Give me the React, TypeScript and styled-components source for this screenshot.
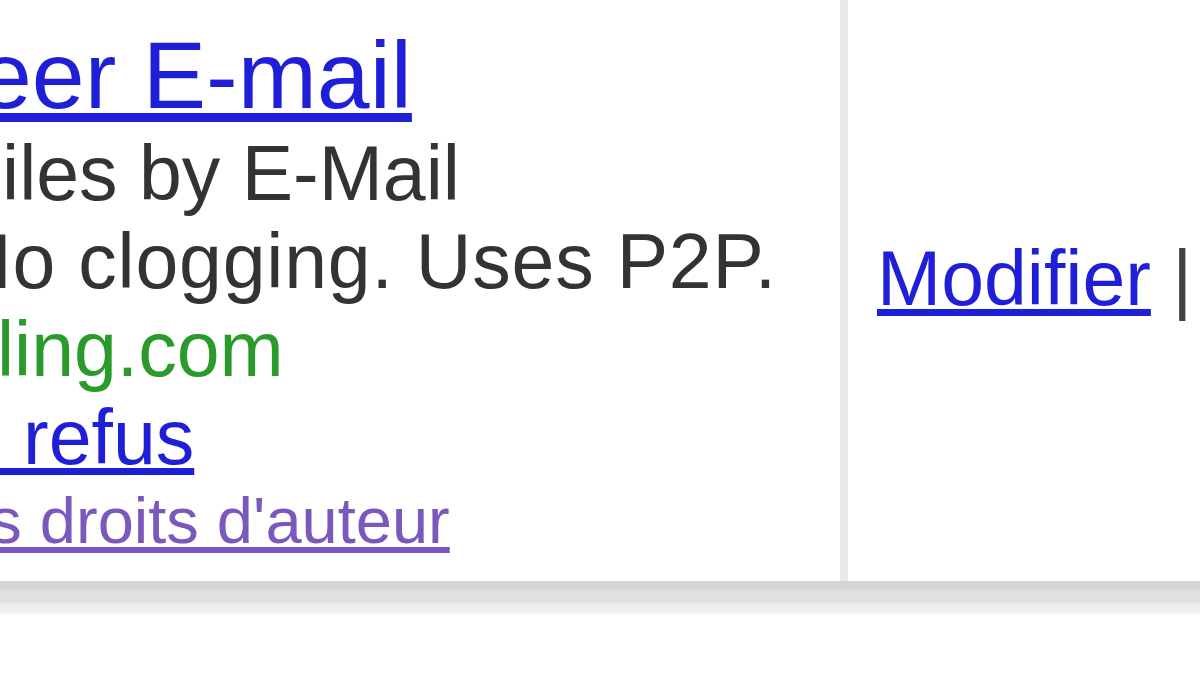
import React from "react";
import styled, { createGlobalStyle } from "styled-components";

const Global = createGlobalStyle`
  html, body {
    margin: 0;
    padding: 0;
    background: #ffffff;
    overflow: hidden;
  }
  body {
    width: 1200px;
    height: 675px;
    font-family: "Liberation Sans", Arial, sans-serif;
  }
`;

const Page = styled.div`
  width: 1200px;
  height: 675px;
  display: flex;
  flex-direction: column;
  overflow: hidden;
  background: #ffffff;
`;

const AdRow = styled.div`
  display: flex;
  height: 581px;
  flex: none;
`;

const AdCell = styled.div`
  width: 848px;
  flex: none;
  box-sizing: border-box;
  padding-top: 25px;
  border-right: 8px solid #e8e8e8;
  overflow: hidden;
  white-space: nowrap;
  display: flex;
  flex-direction: column;
`;

const Line = styled.div<{ $shift: number; $spacing?: number }>`
  margin-left: ${(p) => p.$shift}px;
  letter-spacing: ${(p) => p.$spacing ?? 0}px;
  font-size: 77px;
  line-height: 88px;
  color: #333333;
`;

const TitleLine = styled(Line)`
  font-size: 95px;
  line-height: 100px;
  margin-bottom: 4px;
`;

const SmallLine = styled(Line)`
  font-size: 65px;
  line-height: 79px;
`;

const Link = styled.a<{ $visited?: boolean }>`
  color: ${(p) => (p.$visited ? "#7a58bc" : "#1f1fd8")};
  text-decoration: underline;
  cursor: pointer;
`;

const Url = styled.span`
  color: #2a9a2a;
`;

const ActionCell = styled.div`
  flex: 1;
  display: flex;
  align-items: center;
  padding-left: 29px;
  padding-bottom: 26px;
  white-space: nowrap;
  overflow: hidden;
  font-size: 77px;
  line-height: 88px;
`;

const Pipe = styled.span`
  color: #444444;
`;

const Shadow = styled.div`
  height: 36px;
  flex: none;
  background: linear-gradient(
    to bottom,
    #d3d3d3 0px,
    #d6d6d6 8px,
    #e0e0e0 10px,
    #e2e2e2 21px,
    #ececec 23px,
    #eeeeee 30px,
    #f6f6f6 32px,
    #ffffff 36px
  );
`;

export default function App() {
  return (
    <>
      <Global />
      <Page>
        <AdRow>
          <AdCell>
            <TitleLine $shift={-21}>
              <Link>eer E-mail</Link>
            </TitleLine>
            <Line $shift={-45}>Files by E-Mail</Line>
            <Line $shift={-44} $spacing={0.8}>
              No clogging. Uses P2P.
            </Line>
            <Line $shift={-3}>
              <Url>ling.com</Url>
            </Line>
            <Line $shift={-84}>
              <Link>du refus</Link>
            </Line>
            <SmallLine $shift={-83}>
              <Link $visited>des droits d'auteur</Link>
            </SmallLine>
          </AdCell>
          <ActionCell>
            <Link>Modifier</Link>
            <Pipe>&nbsp;|&nbsp;</Pipe>
            <Link>Supprimer</Link>
          </ActionCell>
        </AdRow>
        <Shadow />
      </Page>
    </>
  );
}
